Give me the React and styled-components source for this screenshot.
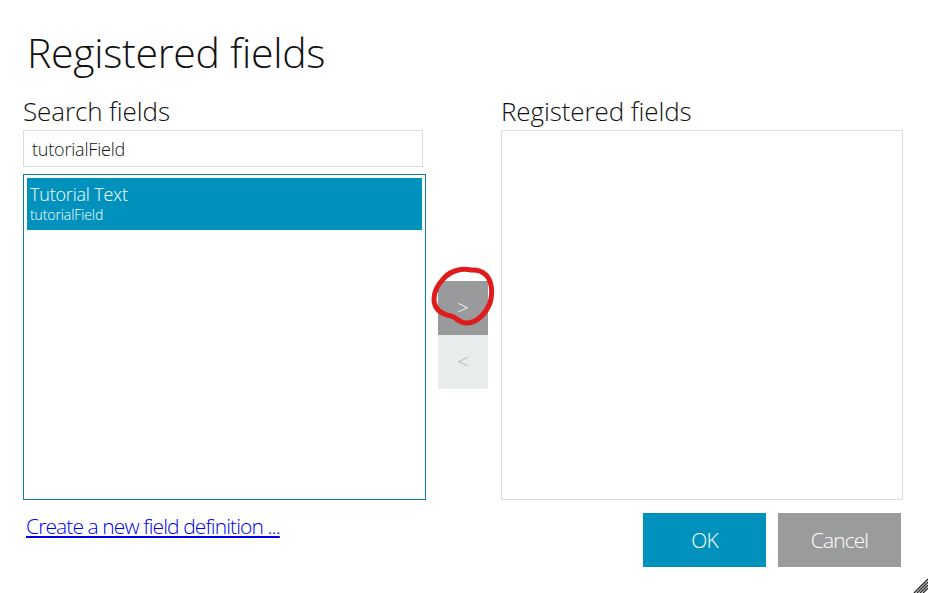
import React from 'react'
import styled, { createGlobalStyle } from 'styled-components'

const GlobalStyle = createGlobalStyle`
  html, body {
    margin: 0;
    padding: 0;
    background: #fff;
  }
  body {
    font-family: "Open Sans", "Liberation Sans", sans-serif;
    color: #111;
  }
`

const Dialog = styled.div`
  position: relative;
  width: 928px;
  height: 593px;
  box-sizing: border-box;
  padding: 26px 27px 0 23px;
  overflow: hidden;
`

const Title = styled.h1`
  margin: 0 0 0 4px;
  font-size: 41px;
  font-weight: 300;
  line-height: 52px;
  letter-spacing: -0.3px;
`

const Columns = styled.div`
  display: grid;
  grid-template-columns: 403px 75px 402px;
  margin-top: 20px;
`

const Column = styled.div`
  display: flex;
  flex-direction: column;
`

const SectionLabel = styled.div`
  font-size: 26px;
  font-weight: 300;
  line-height: 26px;
  height: 26px;
  margin-bottom: 6px;
  letter-spacing: -0.1px;
`

const SearchInput = styled.div`
  width: 400px;
  height: 37px;
  box-sizing: border-box;
  border: 1px solid #dcdcdc;
  padding-left: 8px;
  display: flex;
  align-items: center;
  font-size: 18px;
  font-weight: 300;
  letter-spacing: -0.2px;
`

const FieldList = styled.div`
  margin-top: 7px;
  height: 326px;
  box-sizing: border-box;
  border: 1px solid #0e7e9f;
  padding: 3px;
`

const FieldItem = styled.div`
  background: ${p => (p.$selected ? '#0092bc' : 'transparent')};
  color: ${p => (p.$selected ? '#fff' : '#111')};
  height: 52px;
  box-sizing: border-box;
  padding: 4px 3px;
`

const ItemName = styled.div`
  font-size: 18px;
  font-weight: 300;
  line-height: 24px;
  letter-spacing: -0.2px;
`

const ItemKey = styled.div`
  font-size: 14px;
  font-weight: 300;
  line-height: 18px;
  letter-spacing: -0.1px;
`

const Mover = styled.div`
  padding-top: 183px;
  padding-left: 12px;
`

const ButtonStack = styled.div`
  position: relative;
  display: flex;
  flex-direction: column;
  width: 50px;
`

const MoveButton = styled.button`
  width: 50px;
  height: 54px;
  border: none;
  margin: 0;
  padding: 0 0 2px;
  background: ${p => (p.$active ? '#999a9c' : '#e9eced')};
  color: ${p => (p.$active ? '#fff' : '#a8abad')};
  font-family: "Open Sans", sans-serif;
  font-size: 20px;
  font-weight: 300;
`

const RegisteredBox = styled.div`
  height: 370px;
  box-sizing: border-box;
  border: 1px solid #dcdcdc;
`

const Footer = styled.div`
  display: flex;
  justify-content: space-between;
  align-items: flex-start;
  margin-top: 13px;
`

const Link = styled.a`
  color: #0000ee;
  font-size: 21px;
  font-weight: 300;
  letter-spacing: -0.9px;
  margin-left: 3px;
  margin-top: -1px;
  text-decoration: underline;
`

const Actions = styled.div`
  display: flex;
  gap: 12px;
`

const ActionButton = styled.button`
  width: 123px;
  height: 54px;
  border: none;
  background: ${p => (p.$primary ? '#0092bc' : '#9a9b9d')};
  color: #fff;
  font-family: "Open Sans", sans-serif;
  font-size: 21px;
  font-weight: 300;
  letter-spacing: -0.9px;
`

const Annotation = styled.svg`
  position: absolute;
  left: -7px;
  top: -15px;
  pointer-events: none;
`

const Grip = styled.svg`
  position: absolute;
  right: 0;
  bottom: 0;
`

export default function App() {
  return (
    <>
      <GlobalStyle />
      <Dialog>
        <Title>Registered fields</Title>
        <Columns>
          <Column>
            <SectionLabel>Search fields</SectionLabel>
            <SearchInput>tutorialField</SearchInput>
            <FieldList>
              <FieldItem $selected>
                <ItemName>Tutorial Text</ItemName>
                <ItemKey>tutorialField</ItemKey>
              </FieldItem>
            </FieldList>
          </Column>
          <Mover>
            <ButtonStack>
              <MoveButton $active>&gt;</MoveButton>
              <MoveButton>&lt;</MoveButton>
              <Annotation width="64" height="62" viewBox="0 0 64 62">
                <path
                  d="M40 4 C30 2 20 5 14 11 C8 17 3 25 3 33 C3 43 10 48 20 50 C26 51 28 58 37 57 C47 56 55 47 59 37 C62 27 61 15 55 9 C51 5 46 4 42 4"
                  fill="none"
                  stroke="#e01b1b"
                  strokeWidth="5"
                  strokeLinecap="round"
                />
              </Annotation>
            </ButtonStack>
          </Mover>
          <Column>
            <SectionLabel>Registered fields</SectionLabel>
            <RegisteredBox />
          </Column>
        </Columns>
        <Footer>
          <Link href="#">Create a new field definition ...</Link>
          <Actions>
            <ActionButton $primary>OK</ActionButton>
            <ActionButton>Cancel</ActionButton>
          </Actions>
        </Footer>
        <Grip width="16" height="16" viewBox="0 0 16 16">
          <path
            d="M2 16 L16 2 M5 16 L16 5 M8 16 L16 8 M11 16 L16 11"
            stroke="#222"
            strokeWidth="1.4"
          />
        </Grip>
      </Dialog>
    </>
  )
}
